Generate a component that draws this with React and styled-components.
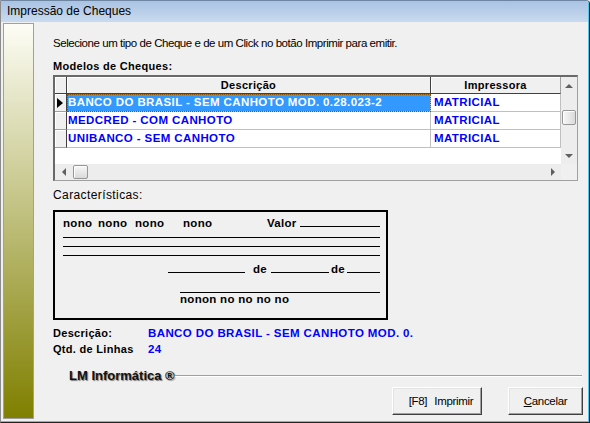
import React from 'react'
import styled, { createGlobalStyle } from 'styled-components'

const GlobalStyle = createGlobalStyle`
  * { box-sizing: border-box; }
  html, body { margin: 0; padding: 0; background: #f0f0f0; }
  body { font-family: "Liberation Sans", Arial, sans-serif; color: #000; }
`

const Window = styled.div`
  width: 590px;
  height: 423px;
  display: flex;
  flex-direction: column;
  border-left: 1px solid #8c8c8c;
  border-top: 1px solid #6f86a3;
  border-right: 1px solid #222;
  border-bottom: 1px solid #222;
  border-top-right-radius: 4px;
  overflow: hidden;
`

const Frame = styled.div`
  flex: 1;
  min-height: 0;
  display: flex;
  flex-direction: column;
  border-right: 1px solid #52c6ef;
  border-bottom: 1px solid #52c6ef;
`

const TitleBar = styled.div`
  height: 21px;
  line-height: 21px;
  padding-left: 6px;
  background: linear-gradient(#a9c3e3, #c8daef);
  font-size: 12px;
`

const Client = styled.div`
  flex: 1;
  min-height: 0;
  display: flex;
  background: #f0f0f0;
  padding: 1px 0 2px 2px;
`

const SidePanel = styled.div`
  width: 31px;
  border: 1px solid #a0a0a0;
  background: linear-gradient(#fdfdf6, #7f7f00);
`

const Content = styled.div`
  flex: 1;
  display: flex;
  flex-direction: column;
  padding: 0 5px 0 19px;
`

const Instruction = styled.div`
  margin-top: 14px;
  font-size: 11.5px;
  letter-spacing: -0.45px;
  line-height: 13px;
`

const Label = styled.div`
  margin-top: ${p => p.$top}px;
  font-size: ${p => (p.$bold ? 11 : 12)}px;
  font-weight: ${p => (p.$bold ? 'bold' : 'normal')};
  letter-spacing: ${p => (p.$bold ? 0.3 : 0.4)}px;
  line-height: 13px;
`

/* ---- grid ---- */

const GridFrame = styled.div`
  width: 525px;
  margin-top: 2px;
  border-style: solid;
  border-width: 2px 1px 1px 2px;
  border-color: #696969 #a0a0a0 #a0a0a0 #696969;
  display: flex;
  flex-direction: column;
  background: #fff;
`

const GridTop = styled.div`
  display: flex;
  height: 87px;
`

const Table = styled.div`
  flex: 1;
  display: flex;
  flex-direction: column;
`

const Row = styled.div`
  display: flex;
  height: ${p => p.$h}px;
`

const Indicator = styled.div`
  width: 12px;
  background: #f0f0f0;
  border-right: 1px solid #404040;
  border-bottom: 1px solid ${p => (p.$head ? '#404040' : '#a0a0a0')};
  box-shadow: inset 1px 1px 0 #fff;
  display: flex;
  align-items: center;
  padding-left: 2px;
`

const Pointer = styled.span`
  width: 0;
  height: 0;
  border-top: 5px solid transparent;
  border-bottom: 5px solid transparent;
  border-left: 6px solid #000;
`

const HeadCell = styled.div`
  width: ${p => p.$w}px;
  background: #f0f0f0;
  border-right: 1px solid ${p => p.$edge || '#404040'};
  border-bottom: 1px solid #404040;
  box-shadow: inset 1px 1px 0 #fff;
  font-size: 11px;
  font-weight: bold;
  letter-spacing: 0.3px;
  line-height: 16px;
  text-align: center;
`

const Cell = styled.div`
  width: ${p => p.$w}px;
  padding-left: ${p => p.$pad}px;
  border-right: 1px solid #c0c0c0;
  border-bottom: 1px solid #c0c0c0;
  font-size: 11.5px;
  font-weight: bold;
  letter-spacing: 0.4px;
  line-height: 17px;
  white-space: nowrap;
  overflow: hidden;
  color: ${p => (p.$selected ? '#fff' : '#0000ff')};
  background: ${p => (p.$selected ? '#3399ff' : '#fff')};
  outline: ${p => (p.$selected ? '1px dotted #8a5200' : 'none')};
  outline-offset: -1px;
`

const Blank = styled.div`
  flex: 1;
  background: #fff;
`

const VScroll = styled.div`
  width: 16px;
  display: flex;
  flex-direction: column;
  align-items: center;
  background: #ededed;
`

const HScroll = styled.div`
  flex: 1;
  height: 16px;
  display: flex;
  align-items: center;
  background: #ededed;
`

const ArrowBox = styled.div`
  width: ${p => (p.$horizontal ? p.$size : 16)}px;
  height: ${p => (p.$horizontal ? 16 : p.$size)}px;
  display: flex;
  align-items: center;
  justify-content: center;
  flex: none;
`

const arrowShapes = {
  up: 'border-width: 0 4px 4px 4px; border-color: transparent transparent #606060 transparent;',
  down: 'border-width: 4px 4px 0 4px; border-color: #606060 transparent transparent transparent;',
  left: 'border-width: 4px 4px 4px 0; border-color: transparent #606060 transparent transparent;',
  right: 'border-width: 4px 0 4px 4px; border-color: transparent transparent transparent #606060;'
}

const Arrow = styled.span`
  width: 0;
  height: 0;
  border-style: solid;
  ${p => arrowShapes[p.$dir]}
`

const Thumb = styled.div`
  flex: none;
  width: ${p => (p.$horizontal ? 15 : 14)}px;
  height: ${p => (p.$horizontal ? 14 : 15)}px;
  margin: ${p => (p.$horizontal ? '0 0 0 1px' : '16px 0 0 0')};
  border: 1px solid #979797;
  border-radius: 2px;
  background: linear-gradient(${p => (p.$horizontal ? '180deg' : '90deg')}, #f7f7f7, #dadada);
  box-shadow: inset 1px 1px 0 #fff;
`

const Spacer = styled.div`
  flex: 1;
`

const Corner = styled.div`
  width: 16px;
  height: 16px;
  background: #f0f0f0;
`

/* ---- cheque preview ---- */

const Cheque = styled.div`
  width: 335px;
  height: 110px;
  margin-top: 8px;
  border: 2px solid #000;
  padding: 5px 6px 0 8px;
  display: flex;
  flex-direction: column;
  font-size: 11.5px;
  font-weight: bold;
  letter-spacing: 0.3px;
  line-height: 13px;
`

const ChequeRow = styled.div`
  display: flex;
  height: 13px;
  margin-top: ${p => p.$top || 0}px;
  margin-left: ${p => p.$indent || 0}px;
`

const Word = styled.span`
  flex: none;
  width: ${p => (p.$w ? `${p.$w}px` : 'auto')};
  margin-left: ${p => p.$ml || 0}px;
`

const Underline = styled.span`
  height: 10px;
  border-bottom: 1px solid #000;
  flex: ${p => (p.$w ? 'none' : 1)};
  width: ${p => (p.$w ? `${p.$w}px` : 'auto')};
  margin-left: ${p => p.$ml || 0}px;
`

const Rule = styled.div`
  height: 1px;
  background: #000;
  margin-top: ${p => p.$top}px;
  margin-left: ${p => p.$indent || 0}px;
`

/* ---- info + footer ---- */

const InfoRow = styled.div`
  display: flex;
  margin-top: ${p => p.$top}px;
  font-size: 11.5px;
  font-weight: bold;
  line-height: 13px;
`

const InfoLabel = styled.span`
  width: 95px;
  font-size: 11px;
  letter-spacing: 0.3px;
`

const InfoValue = styled.span`
  color: #0000ff;
  letter-spacing: 0.4px;
`

const Group = styled.div`
  display: flex;
  align-items: center;
  margin-top: 12px;
  padding-left: 16px;
  height: 15px;
`

const Brand = styled.span`
  font-size: 13px;
  font-weight: bold;
  line-height: 15px;
  color: #111;
  text-shadow: 1px 1px 1px #7a7a7a;
`

const Etched = styled.div`
  flex: 1;
  height: 2px;
  margin: 1px 1px 0 0;
  border-top: 1px solid #a0a0a0;
  border-bottom: 1px solid #fff;
`

const Buttons = styled.div`
  display: flex;
  justify-content: flex-end;
  gap: 26px;
  margin-top: 4px;
`

const Button = styled.button`
  width: ${p => p.$w}px;
  height: 28px;
  padding: 0 0 0 ${p => p.$shift || 0}px;
  background: #f0f0f0;
  border: 1px solid;
  border-color: #fff #404040 #404040 #fff;
  box-shadow: inset -1px -1px 0 #a0a0a0, inset 1px 1px 0 #e3e3e3;
  font-family: "Liberation Sans", Arial, sans-serif;
  font-size: 11.5px;
  letter-spacing: -0.3px;
  color: #000;
`

const Key = styled.span`
  margin-right: 7px;
`

const rows = [
  { desc: 'BANCO DO BRASIL - SEM CANHOTO MOD. 0.28.023-2', printer: 'MATRICIAL', selected: true },
  { desc: 'MEDCRED - COM CANHOTO', printer: 'MATRICIAL' },
  { desc: 'UNIBANCO - SEM CANHOTO', printer: 'MATRICIAL' }
]

export default function App() {
  return (
    <>
      <GlobalStyle />
      <Window>
        <Frame>
          <TitleBar>Impressão de Cheques</TitleBar>
          <Client>
            <SidePanel />
            <Content>
              <Instruction>
                Selecione um tipo de Cheque e de um Click no botão Imprimir para emitir.
              </Instruction>
              <Label $bold $top={10}>Modelos de Cheques:</Label>

              <GridFrame>
                <GridTop>
                  <Table>
                    <Row $h={17}>
                      <Indicator $head />
                      <HeadCell $w={364}>Descrição</HeadCell>
                      <HeadCell $w={130} $edge="#a0a0a0">Impressora</HeadCell>
                    </Row>
                    {rows.map(r => (
                      <Row $h={18} key={r.desc}>
                        <Indicator>{r.selected && <Pointer />}</Indicator>
                        <Cell $w={364} $pad={1} $selected={r.selected}>{r.desc}</Cell>
                        <Cell $w={130} $pad={3}>{r.printer}</Cell>
                      </Row>
                    ))}
                    <Blank />
                  </Table>
                  <VScroll>
                    <ArrowBox $size={17}><Arrow $dir="up" /></ArrowBox>
                    <Thumb />
                    <Spacer />
                    <ArrowBox $size={17}><Arrow $dir="down" /></ArrowBox>
                  </VScroll>
                </GridTop>
                <Row $h={16}>
                  <HScroll>
                    <ArrowBox $horizontal $size={17}><Arrow $dir="left" /></ArrowBox>
                    <Thumb $horizontal />
                    <Spacer />
                    <ArrowBox $horizontal $size={16}><Arrow $dir="right" /></ArrowBox>
                  </HScroll>
                  <Corner />
                </Row>
              </GridFrame>

              <Label $top={8}>Características:</Label>

              <Cheque>
                <ChequeRow>
                  <Word $w={35}>nono</Word>
                  <Word $w={37}>nono</Word>
                  <Word $w={48}>nono</Word>
                  <Word $w={84}>nono</Word>
                  <Word>Valor</Word>
                  <Underline $ml={3} />
                </ChequeRow>
                <Rule $top={7} />
                <Rule $top={8} />
                <Rule $top={8} />
                <ChequeRow $top={7} $indent={105}>
                  <Underline $w={77} />
                  <Word $ml={8}>de</Word>
                  <Underline $w={58} $ml={4} />
                  <Word $ml={2}>de</Word>
                  <Underline $ml={2} />
                </ChequeRow>
                <Rule $top={16} $indent={117} />
                <ChequeRow $indent={117}>
                  <Word>nonon no no no no</Word>
                </ChequeRow>
              </Cheque>

              <InfoRow $top={7}>
                <InfoLabel>Descrição:</InfoLabel>
                <InfoValue>BANCO DO BRASIL - SEM CANHOTO MOD. 0.</InfoValue>
              </InfoRow>
              <InfoRow $top={3}>
                <InfoLabel>Qtd. de Linhas</InfoLabel>
                <InfoValue>24</InfoValue>
              </InfoRow>

              <Group>
                <Brand>LM Informática ®</Brand>
                <Etched />
              </Group>

              <Buttons>
                <Button $w={90} $shift={8}><Key>[F8]</Key>Imprimir</Button>
                <Button $w={75}><u>C</u>ancelar</Button>
              </Buttons>
            </Content>
          </Client>
        </Frame>
      </Window>
    </>
  )
}
